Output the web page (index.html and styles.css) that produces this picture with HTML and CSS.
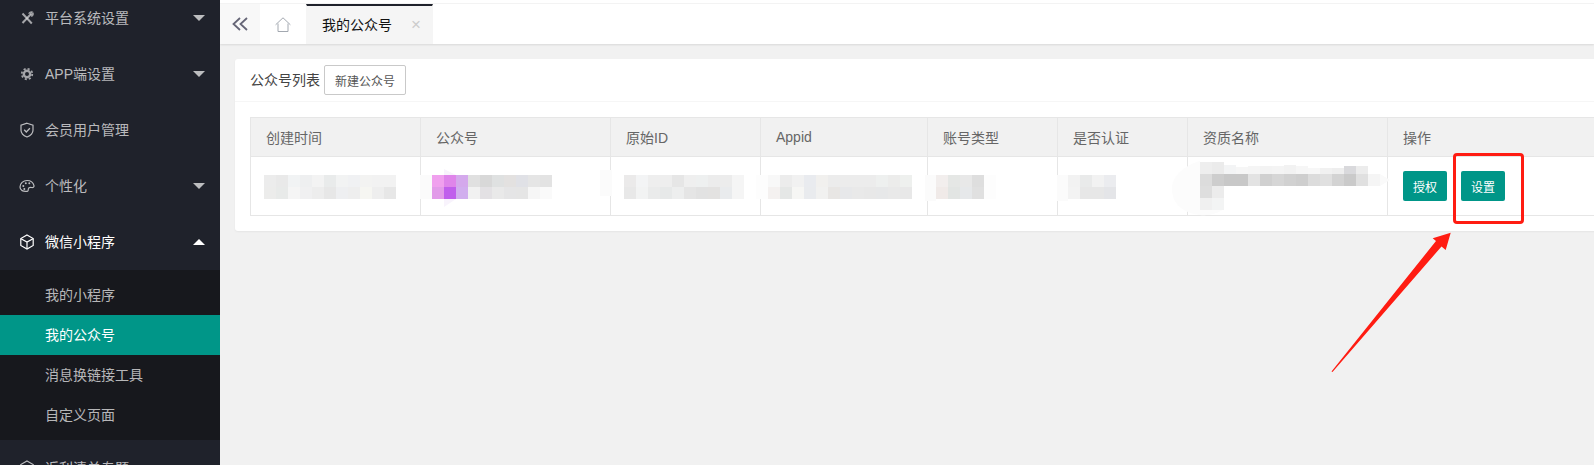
FILE: index.html
```html
<!DOCTYPE html>
<html lang="zh-CN">
<head>
<meta charset="utf-8">
<title>我的公众号</title>
<link rel="stylesheet" href="styles.css">
</head>
<body>
<aside class="sidebar">
  <nav class="menu">
    <div class="menu-item">
      <svg class="menu-icon icon-soft" viewBox="0 0 16 16"><path d="M3.500 3.500 12.800 13.500" stroke-width="2"/><path d="M11.800 4.200 3.500 13" stroke-width="2"/><path d="M9.800 3.800c.4-1.400 2-2.200 3.400-1.700l-1.700 1.700.9 1 1.700-1.600c.5 1.400-.4 2.900-1.900 3.200" stroke-width="1.200"/></svg>
      <span class="menu-label">平台系统设置</span><i class="caret"></i>
    </div>
    <div class="menu-item">
      <svg class="menu-icon icon-soft" viewBox="0 0 16 16"><circle cx="8" cy="8" r="5.300" stroke-width="1.700" stroke-dasharray="2.100 2.060"/><circle cx="8" cy="8" r="3.200" stroke-width="2.400"/></svg>
      <span class="menu-label">APP端设置</span><i class="caret"></i>
    </div>
    <div class="menu-item">
      <svg class="menu-icon" viewBox="0 0 16 16"><path d="M8 1.200 14 3.200v5c0 3.300-2.800 5.500-6 6.800-3.200-1.300-6-3.500-6-6.800v-5z" stroke-width="1.200"/><path d="m5.200 7.800 2.100 2.200 3.600-3.800" stroke-width="1.300"/></svg>
      <span class="menu-label">会员用户管理</span>
    </div>
    <div class="menu-item">
      <svg class="menu-icon" viewBox="0 0 16 16"><path d="M1 9c0-3.800 3.200-6.500 7-6.500 3.500 0 6.300 2 7 5.200.3 1.300-1 2-2.500 1.800-1.500-.2-3 .2-3.200 1.500-.2 1.200.3 2.100-1 2.300C4.200 13.800 1 12.500 1 9z" stroke-width="1.200"/><circle cx="4.300" cy="8" r="1" class="fill"/><circle cx="6.800" cy="5.300" r="1" class="fill"/><circle cx="10.300" cy="5.300" r="1" class="fill"/><circle cx="5.300" cy="11" r="1" class="fill"/></svg>
      <span class="menu-label">个性化</span><i class="caret"></i>
    </div>
    <div class="menu-item is-open">
      <svg class="menu-icon" viewBox="0 0 16 16"><path d="M8 1 14.200 4.500v7L8 15 1.800 11.500v-7z" stroke-width="1.200"/><path d="M2 4.700 8 8l6-3.300M8 8v6.800" stroke-width="1.200"/></svg>
      <span class="menu-label">微信小程序</span><i class="caret caret-up"></i>
    </div>
    <div class="submenu">
      <div class="sub-item">我的小程序</div>
      <div class="sub-item is-active">我的公众号</div>
      <div class="sub-item">消息换链接工具</div>
      <div class="sub-item">自定义页面</div>
    </div>
    <div class="menu-item">
      <svg class="menu-icon" viewBox="0 0 16 16"><path d="M8 1 14.200 4.500v7L8 15 1.800 11.500v-7z" stroke-width="1.200"/></svg>
      <span class="menu-label">返利清单专题</span>
    </div>
  </nav>
</aside>

<main class="main">
  <header class="topbar">
    <div class="top-strip"></div>
    <div class="tabs">
      <div class="tab-toggle">
        <svg class="toggle-icon" viewBox="0 0 16 14"><path d="M8 1 1.500 7 8 13M15 1 8.500 7 15 13"/></svg>
      </div>
      <div class="tab-home">
        <svg class="home-icon" viewBox="0 0 16 15"><path d="M.6 7.800 8 .8l7.400 7M3 6.500v8h10v-8"/></svg>
      </div>
      <div class="tab-current">
        <span class="tab-title">我的公众号</span>
        <span class="tab-close">×</span>
      </div>
    </div>
  </header>

  <section class="card">
    <div class="card-head">
      <span class="card-title">公众号列表</span>
      <button class="btn-outline" type="button">新建公众号</button>
    </div>
    <div class="card-body">
      <table class="table">
        <colgroup>
          <col class="c1"><col class="c2"><col class="c3"><col class="c4"><col class="c5"><col class="c6"><col class="c7"><col class="c8">
        </colgroup>
        <thead>
          <tr><th>创建时间</th><th>公众号</th><th>原始ID</th><th>Appid</th><th>账号类型</th><th>是否认证</th><th>资质名称</th><th>操作</th></tr>
        </thead>
        <tbody>
          <tr>
            <td><svg class="mosaic" width="160" height="58" shape-rendering="crispEdges">
              <rect x="13" y="18" width="12" height="12" fill="#ececec"/><rect x="25" y="18" width="12" height="12" fill="#e9e9e9"/><rect x="37" y="18" width="12" height="12" fill="#f1f3f4"/><rect x="49" y="18" width="12" height="12" fill="#eeeff0"/><rect x="61" y="18" width="12" height="12" fill="#f3f3f3"/><rect x="73" y="18" width="12" height="12" fill="#e9ebeb"/><rect x="85" y="18" width="12" height="12" fill="#f2f3f3"/><rect x="97" y="18" width="12" height="12" fill="#f0f1f3"/><rect x="109" y="18" width="12" height="12" fill="#f3f3f2"/><rect x="121" y="18" width="12" height="12" fill="#f2f2f2"/><rect x="133" y="18" width="12" height="12" fill="#f2f2f2"/>
              <rect x="13" y="30" width="12" height="12" fill="#ececeb"/><rect x="25" y="30" width="12" height="12" fill="#e8eae9"/><rect x="37" y="30" width="12" height="12" fill="#f5f5f5"/><rect x="49" y="30" width="12" height="12" fill="#f0f0f1"/><rect x="61" y="30" width="12" height="12" fill="#ededed"/><rect x="73" y="30" width="12" height="12" fill="#e7e7e7"/><rect x="85" y="30" width="12" height="12" fill="#eeeff1"/><rect x="97" y="30" width="12" height="12" fill="#eeeeee"/><rect x="109" y="30" width="12" height="12" fill="#f6f6f2"/><rect x="121" y="30" width="12" height="12" fill="#eeeeee"/><rect x="133" y="30" width="12" height="12" fill="#e7e7e7"/>
            </svg></td>
            <td><svg class="mosaic" width="180" height="58" shape-rendering="crispEdges">
              <rect x="-2" y="18" width="12" height="24" fill="#fbfbfb"/>
              <polygon points="22,12 34,18 34,42 22,50" fill="#f8f3fc" shape-rendering="auto"/>
              <rect x="10" y="18" width="12" height="12" fill="#f0a0ee"/><rect x="22" y="18" width="12" height="12" fill="#df85ea"/><rect x="34" y="18" width="12" height="12" fill="#d4a9ec"/><rect x="46" y="18" width="12" height="12" fill="#e0e0e0"/><rect x="58" y="18" width="12" height="12" fill="#d8d8d8"/><rect x="70" y="18" width="12" height="12" fill="#dfe1e1"/><rect x="82" y="18" width="12" height="12" fill="#e3e1e0"/><rect x="94" y="18" width="12" height="12" fill="#e0e1e6"/><rect x="106" y="18" width="12" height="12" fill="#e5e5e5"/><rect x="118" y="18" width="12" height="12" fill="#e3e3e3"/>
              <rect x="10" y="30" width="12" height="12" fill="#e29be9"/><rect x="22" y="30" width="12" height="12" fill="#c05fec"/><rect x="34" y="30" width="12" height="12" fill="#d1aeee"/><rect x="46" y="30" width="12" height="12" fill="#f1f1f1"/><rect x="58" y="30" width="12" height="12" fill="#e3e1e4"/><rect x="70" y="30" width="12" height="12" fill="#e9e9e9"/><rect x="82" y="30" width="12" height="12" fill="#e5e5e6"/><rect x="94" y="30" width="12" height="12" fill="#e5e5e5"/><rect x="106" y="30" width="12" height="12" fill="#f6f6f6"/><rect x="118" y="30" width="12" height="12" fill="#fafafa"/>
            </svg></td>
            <td><svg class="mosaic" width="140" height="58" shape-rendering="crispEdges">
              <rect x="-12" y="13" width="12" height="26" fill="#fbfbfb"/>
              <rect x="12" y="18" width="12" height="12" fill="#ebeaea"/><rect x="24" y="18" width="12" height="12" fill="#f3f4f5"/><rect x="36" y="18" width="12" height="12" fill="#eeeeee"/><rect x="48" y="18" width="12" height="12" fill="#eeeeee"/><rect x="60" y="18" width="12" height="12" fill="#e6e6e6"/><rect x="72" y="18" width="12" height="12" fill="#efefef"/><rect x="84" y="18" width="12" height="12" fill="#eef0f0"/><rect x="96" y="18" width="12" height="12" fill="#ececec"/><rect x="108" y="18" width="12" height="12" fill="#ececec"/><rect x="120" y="18" width="12" height="12" fill="#f5f5f5"/>
              <rect x="12" y="30" width="12" height="12" fill="#e8e8e8"/><rect x="24" y="30" width="12" height="12" fill="#f2f3f3"/><rect x="36" y="30" width="12" height="12" fill="#eaebeb"/><rect x="48" y="30" width="12" height="12" fill="#e7e9e9"/><rect x="60" y="30" width="12" height="12" fill="#edeeee"/><rect x="72" y="30" width="12" height="12" fill="#e5e5e5"/><rect x="84" y="30" width="12" height="12" fill="#e2e2e2"/><rect x="96" y="30" width="12" height="12" fill="#e3e2e1"/><rect x="108" y="30" width="12" height="12" fill="#e9ebed"/><rect x="120" y="30" width="12" height="12" fill="#f5f5f5"/>
            </svg></td>
            <td><svg class="mosaic" width="160" height="58" shape-rendering="crispEdges">
              <rect x="-6" y="18" width="12" height="12" fill="#fdfdfd"/><rect x="6" y="18" width="12" height="12" fill="#f8f8f8"/><rect x="18" y="18" width="12" height="12" fill="#ececec"/><rect x="30" y="18" width="12" height="12" fill="#f1f1f1"/><rect x="42" y="18" width="12" height="12" fill="#e9ebef"/><rect x="54" y="18" width="12" height="12" fill="#f1f0ee"/><rect x="66" y="18" width="48" height="12" fill="#ececec"/><rect x="114" y="18" width="12" height="12" fill="#eef0ef"/><rect x="126" y="18" width="12" height="12" fill="#ececeb"/><rect x="138" y="18" width="12" height="12" fill="#eef0ee"/>
              <rect x="-6" y="30" width="12" height="12" fill="#fdfdfd"/><rect x="6" y="30" width="12" height="12" fill="#f4f1f0"/><rect x="18" y="30" width="12" height="12" fill="#e5e7e6"/><rect x="30" y="30" width="12" height="12" fill="#f6f6f4"/><rect x="42" y="30" width="12" height="12" fill="#e9ebee"/><rect x="54" y="30" width="12" height="12" fill="#f1f1f0"/><rect x="66" y="30" width="12" height="12" fill="#e8e6e4"/><rect x="78" y="30" width="12" height="12" fill="#e7e8ea"/><rect x="90" y="30" width="12" height="12" fill="#e9e9e9"/><rect x="102" y="30" width="12" height="12" fill="#e8e8e8"/><rect x="114" y="30" width="12" height="12" fill="#e7e8e9"/><rect x="126" y="30" width="12" height="12" fill="#e9e9e9"/><rect x="138" y="30" width="12" height="12" fill="#e8e8e8"/>
            </svg></td>
            <td><svg class="mosaic" width="120" height="58" shape-rendering="crispEdges">
              <rect x="-4" y="18" width="11" height="26" fill="#fbfbfb"/><rect x="55" y="18" width="12" height="24" fill="#fdfdfd"/>
              <rect x="7" y="18" width="12" height="12" fill="#f2eeed"/><rect x="19" y="18" width="12" height="12" fill="#e5e7e5"/><rect x="31" y="18" width="12" height="12" fill="#e8e8e8"/><rect x="43" y="18" width="12" height="12" fill="#dedede"/>
              <rect x="7" y="30" width="12" height="12" fill="#f0eae8"/><rect x="19" y="30" width="12" height="12" fill="#e2e5e3"/><rect x="31" y="30" width="12" height="12" fill="#e6e8ea"/><rect x="43" y="30" width="12" height="12" fill="#e0e0e0"/>
            </svg></td>
            <td><svg class="mosaic" width="120" height="58" shape-rendering="crispEdges">
              <rect x="-2" y="18" width="11" height="26" fill="#fbfbfb"/>
              <rect x="9" y="18" width="12" height="12" fill="#f2f2f2"/><rect x="21" y="18" width="12" height="12" fill="#e9eaea"/><rect x="33" y="18" width="12" height="12" fill="#f2f2f2"/><rect x="45" y="18" width="12" height="12" fill="#ebecef"/>
              <rect x="9" y="30" width="12" height="12" fill="#f3f3f3"/><rect x="21" y="30" width="12" height="12" fill="#e7e7e7"/><rect x="33" y="30" width="12" height="12" fill="#e7e7e7"/><rect x="45" y="30" width="12" height="12" fill="#e4e5e8"/>
            </svg></td>
            <td><svg class="mosaic" width="198" height="58" shape-rendering="crispEdges">
              <path d="M11 4C-3 8-17 18-17 32c0 14 10 24 28 26 10 1 18-2 22-5V29H11z" fill="#fcfcfc" shape-rendering="auto"/>
              <polygon points="191,17 201,23 191,29" fill="#fafafa" shape-rendering="auto"/>
              <rect x="11" y="5" width="12" height="12" fill="#eeeeee"/><rect x="23" y="5" width="12" height="12" fill="#ebebeb"/><rect x="35" y="8" width="12" height="9" fill="#f3f4f5"/><rect x="47" y="10" width="12" height="7" fill="#f6f6f6"/><rect x="59" y="9" width="12" height="8" fill="#f5f5f5"/><rect x="71" y="9" width="12" height="8" fill="#f3f3f3"/><rect x="83" y="9" width="12" height="8" fill="#f4f4f4"/><rect x="95" y="8" width="12" height="9" fill="#f2f2f2"/><rect x="107" y="9" width="12" height="8" fill="#f6f6f6"/><rect x="119" y="11" width="12" height="6" fill="#f7f7f7"/><rect x="131" y="11" width="12" height="6" fill="#f1f1f1"/><rect x="143" y="11" width="12" height="6" fill="#eeeeee"/><rect x="155" y="9" width="12" height="8" fill="#d9d9dc"/><rect x="167" y="9" width="12" height="8" fill="#ececec"/>
              <rect x="11" y="17" width="12" height="12" fill="#dcdcdc"/><rect x="23" y="17" width="12" height="12" fill="#cdcdcd"/><rect x="35" y="17" width="24" height="12" fill="#c8c8c8"/><rect x="59" y="17" width="12" height="12" fill="#e3e3e3"/><rect x="71" y="17" width="12" height="12" fill="#d0d0d0"/><rect x="83" y="17" width="12" height="12" fill="#d6d6d6"/><rect x="95" y="17" width="12" height="12" fill="#d1d1d1"/><rect x="107" y="17" width="12" height="12" fill="#cecece"/><rect x="119" y="17" width="12" height="12" fill="#dcdcdc"/><rect x="131" y="17" width="12" height="12" fill="#e0e0e0"/><rect x="143" y="17" width="12" height="12" fill="#d3d3d3"/><rect x="155" y="17" width="12" height="12" fill="#cacaca"/><rect x="167" y="17" width="12" height="12" fill="#e0e0e0"/><rect x="179" y="17" width="12" height="12" fill="#f5f5f5"/>
              <rect x="11" y="29" width="12" height="12" fill="#dedede"/><rect x="23" y="29" width="12" height="12" fill="#ececec"/>
              <rect x="11" y="41" width="12" height="12" fill="#f0f0f0"/><rect x="23" y="41" width="12" height="12" fill="#f3f4f4"/>
            </svg></td>
            <td class="actions">
              <div class="action-row">
                <button class="btn" type="button">授权</button>
                <button class="btn" type="button">设置</button>
              </div>
            </td>
          </tr>
        </tbody>
      </table>
    </div>
  </section>
</main>

<svg class="annotation" width="1594" height="465" viewBox="0 0 1594 465">
  <rect class="anno-box" x="1454.500" y="154.500" width="68" height="68" rx="2.500"/>
  <polygon class="anno-arrow" points="1331.500,371.500 1436,241 1432.700,238.300 1450.700,232.700 1445.700,250 1441.500,246.500 1332.500,372"/>
</svg>
</body>
</html>
```
FILE: styles.css
```css
* { box-sizing: border-box; }
html, body { margin: 0; height: 465px; overflow: hidden; }
body {
  display: flex;
  background: #f1f1f1;
  font-family: "Liberation Sans", "Noto Sans CJK SC", sans-serif;
  font-size: 14px;
  color: #666;
}

/* sidebar */
.sidebar { flex: none; width: 220px; height: 465px; overflow: hidden; background: #1f222b; }
.menu { margin-top: -10px; }
.menu-item {
  display: flex;
  align-items: center;
  height: 56px;
  padding-left: 19px;
  color: rgba(255, 255, 255, .7);
}
.menu-item.is-open { color: #fff; }
.menu-icon {
  flex: none;
  width: 16px;
  height: 16px;
  margin-right: 10px;
  fill: none;
  stroke: currentColor;
}
.icon-soft { opacity: .85; }
.menu-icon .fill { fill: currentColor; stroke: none; }
.menu-label { flex: 1; line-height: 20px; }
.caret {
  flex: none;
  width: 0;
  height: 0;
  margin-right: 15px;
  margin-top: -1px;
  border: 6px solid transparent;
  border-top-color: rgba(255, 255, 255, .7);
  border-bottom-width: 0;
}
.caret-up {
  border-top-width: 0;
  border-bottom-width: 6px;
  border-top-color: transparent;
  border-bottom-color: #fff;
}
.submenu { padding: 5px 0; background: #17181d; }
.sub-item {
  height: 40px;
  padding-left: 45px;
  line-height: 40px;
  color: rgba(255, 255, 255, .7);
}
.sub-item.is-active { background: #009688; color: #fff; }

/* main */
.main { flex: 1; min-width: 0; overflow: hidden; }
.topbar {
  height: 44px;
  background: #fff;
  box-shadow: 0 1px 2px rgba(0, 0, 0, .1);
}
.top-strip { height: 4px; border-bottom: 1px solid #f3f3f3; }
.tabs { display: flex; height: 40px; }
.tab-toggle {
  flex: none;
  display: flex;
  align-items: center;
  justify-content: center;
  width: 40px;
  background: #f8f8f8;
}
.toggle-icon { width: 16px; height: 14px; fill: none; stroke: #667; stroke-width: 1.800; }
.tab-home {
  flex: none;
  display: flex;
  align-items: center;
  justify-content: center;
  width: 46px;
}
.home-icon { width: 16px; height: 15px; fill: none; stroke: #a3a8b0; stroke-width: 1; }
.tab-current {
  flex: none;
  display: flex;
  align-items: center;
  width: 127px;
  padding-left: 15px;
  background: #f5f5f5;
  border-top: 2px solid #1f222b;
  border-left: 1px solid #f5f5f5;
  border-right: 1px solid #f5f5f5;
  color: #111;
}
.tab-title { line-height: 20px; }
.tab-close { margin-left: 19px; color: #ccc; font-size: 17px; line-height: 20px; }

/* card */
.card {
  width: 1500px;
  margin: 15px 0 0 15px;
  background: #fff;
  border-radius: 3px;
  box-shadow: 0 1px 2px rgba(0, 0, 0, .05);
}
.card-head {
  display: flex;
  align-items: center;
  gap: 4px;
  height: 43px;
  padding-left: 15px;
  border-bottom: 1px solid #f6f6f6;
  color: #444;
}
.card-title { line-height: 20px; }
.btn-outline {
  width: 82px;
  height: 30px;
  padding: 0;
  border: 1px solid #c9c9c9;
  border-radius: 2px;
  background: #fff;
  color: #555;
  font: inherit;
  font-size: 12px;
}
.card-body { padding: 15px; }
.table { width: 1480px; border-collapse: collapse; table-layout: fixed; }
.c1 { width: 170px; }
.c2 { width: 190px; }
.c3 { width: 150px; }
.c4 { width: 167px; }
.c5 { width: 130px; }
.c6 { width: 130px; }
.c7 { width: 200px; }
.c8 { width: 343px; }
.table th, .table td { border: 1px solid #e6e6e6; }
.table th {
  height: 39px;
  padding: 0 15px;
  background: #f1f1f1;
  color: #666;
  font-weight: 400;
  text-align: left;
}
.table td { height: 59px; padding: 0; }
.mosaic { display: block; overflow: visible; }
.table td + td .mosaic { margin-left: 1px; }
.table .actions { padding-left: 15px; }
.action-row { display: flex; gap: 14px; }
.btn {
  width: 44px;
  height: 30px;
  padding: 0;
  border: 0;
  border-radius: 2px;
  background: #009688;
  color: #fff;
  font: inherit;
  font-size: 12px;
}

/* annotation drawn over the screenshot */
.annotation { position: absolute; left: 0; top: 0; pointer-events: none; }
.anno-box { fill: none; stroke: #ff1c12; stroke-width: 3; }
.anno-arrow { fill: #ff1c12; }
```
